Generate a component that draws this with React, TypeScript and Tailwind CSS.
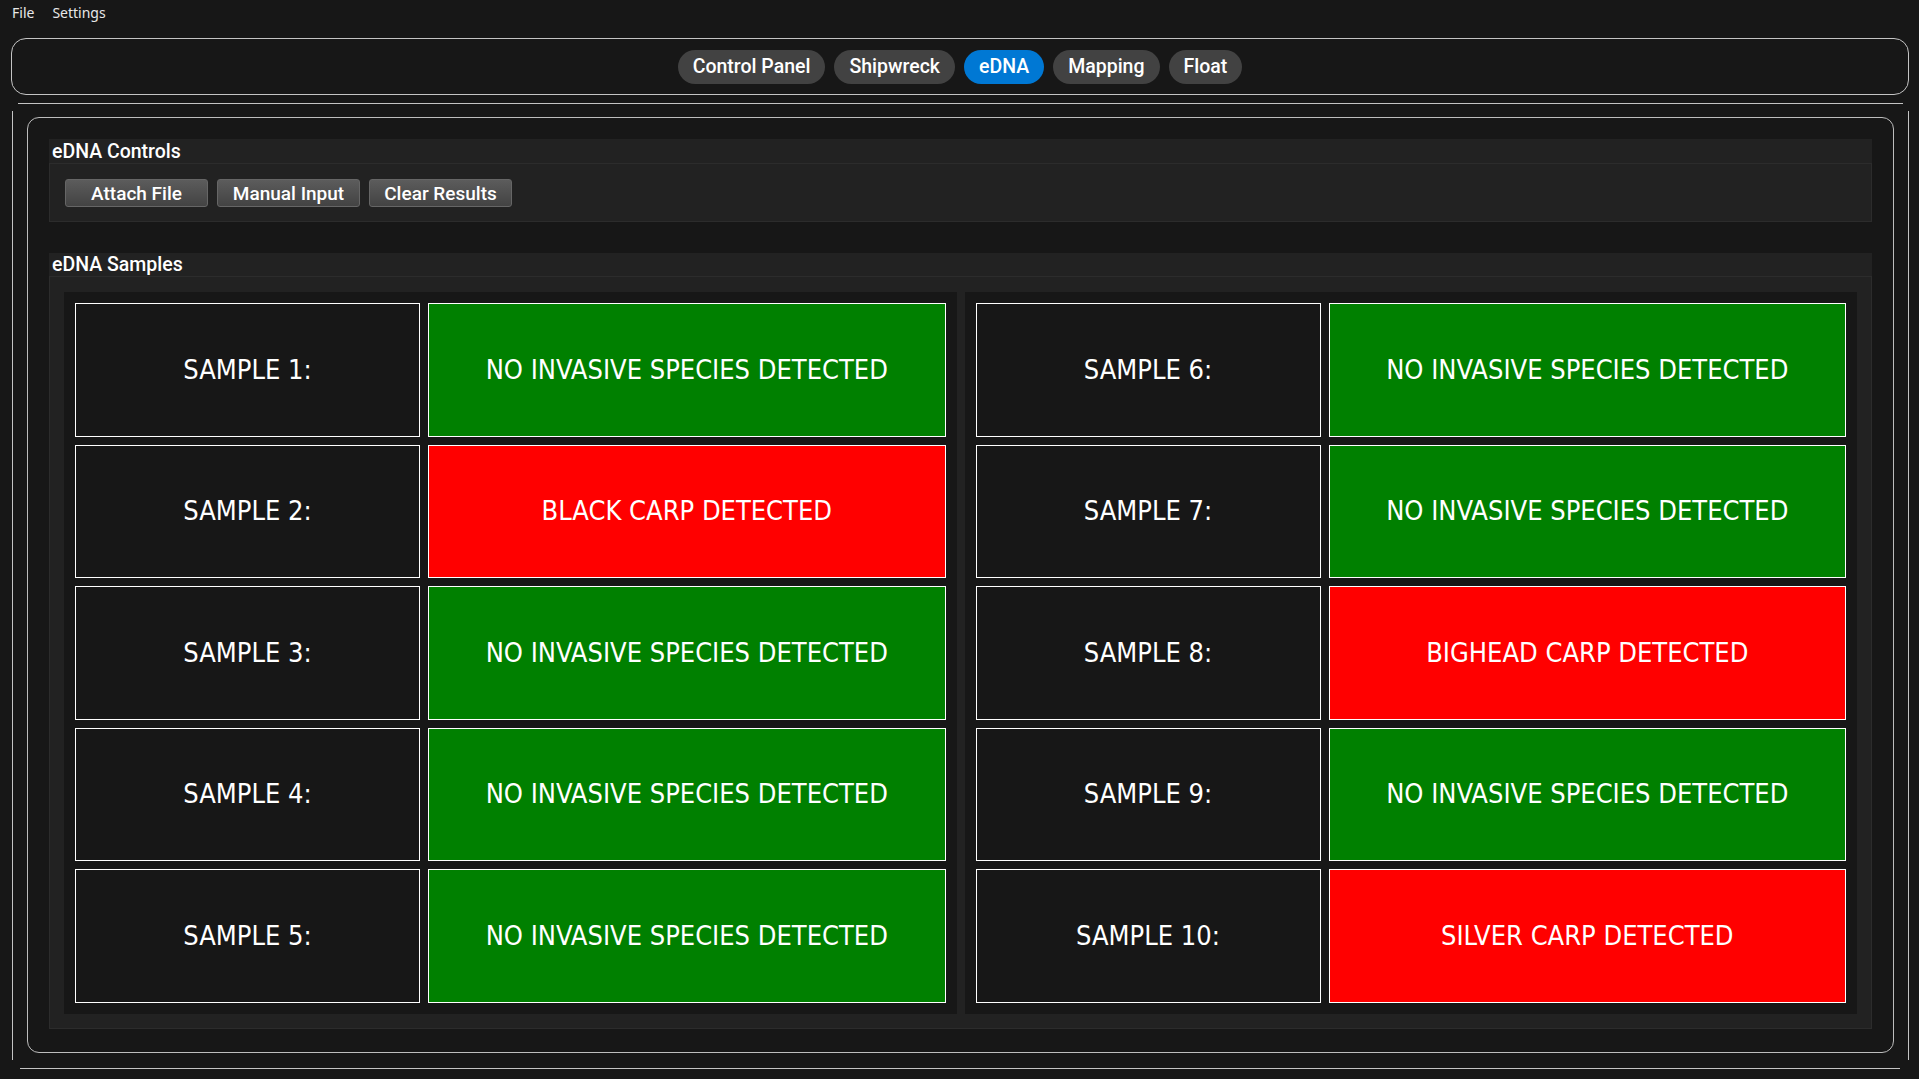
const samples = [
  { label: "SAMPLE 1:", result: "NO INVASIVE SPECIES DETECTED", alert: false },
  { label: "SAMPLE 2:", result: "BLACK CARP DETECTED", alert: true },
  { label: "SAMPLE 3:", result: "NO INVASIVE SPECIES DETECTED", alert: false },
  { label: "SAMPLE 4:", result: "NO INVASIVE SPECIES DETECTED", alert: false },
  { label: "SAMPLE 5:", result: "NO INVASIVE SPECIES DETECTED", alert: false },
  { label: "SAMPLE 6:", result: "NO INVASIVE SPECIES DETECTED", alert: false },
  { label: "SAMPLE 7:", result: "NO INVASIVE SPECIES DETECTED", alert: false },
  { label: "SAMPLE 8:", result: "BIGHEAD CARP DETECTED", alert: true },
  { label: "SAMPLE 9:", result: "NO INVASIVE SPECIES DETECTED", alert: false },
  { label: "SAMPLE 10:", result: "SILVER CARP DETECTED", alert: true },
];

const tabs = ["Control Panel", "Shipwreck", "eDNA", "Mapping", "Float"];

export default function App() {
  return (
    <div className="flex h-[1079px] w-full flex-col overflow-hidden bg-[#171717] font-['Roboto',sans-serif] text-white">
      {/* menu bar */}
      <div className="flex h-[25px] items-center gap-[18px] pl-[12px] font-['Noto_Sans',sans-serif] text-[14px] text-[#e8e8e8]">
        <span>File</span>
        <span>Settings</span>
      </div>

      {/* tab strip */}
      <div className="mt-[13px] ml-[11px] mr-[10px] flex h-[57px] items-center justify-center gap-[9px] rounded-[15px] border border-[#c4c4c4]">
        {tabs.map((t) => (
          <button
            key={t}
            className={
              t === "eDNA"
                ? "h-[34px] rounded-full bg-[#0078d4] px-[15px] text-[19.5px] font-medium text-white"
                : "h-[34px] rounded-full bg-[#424242] px-[15px] text-[19.5px] font-medium text-white"
            }
          >
            {t}
          </button>
        ))}
      </div>

      <div className="mt-[8px] ml-[18px] mr-[16px] h-px bg-[#c4c4c4]" />

      {/* tab content frame */}
      <div className="mt-[7px] ml-[12px] mr-[10px] h-[949px] border-x border-[#c4c4c4] px-[14px] pt-[6px]">
        <div className="flex h-[936px] flex-col rounded-[12px] border border-[#bdbdbd] p-[21px]">
          <SectionHeader title="eDNA Controls" h="h-[24px]" />
          <div className="flex h-[59px] gap-[9px] border border-[#2c2c2c] bg-[#222222] px-[15px] pt-[15px]">
            <ToolButton label="Attach File" />
            <ToolButton label="Manual Input" />
            <ToolButton label="Clear Results" />
          </div>

          <div className="mt-[31px]">
            <SectionHeader title="eDNA Samples" h="h-[23px]" />
          </div>
          <div className="grid h-[753px] grid-cols-2 gap-[8px] border border-[#2c2c2c] bg-[#222222] p-[14px] pt-[15px]">
            <SampleGroup items={samples.slice(0, 5)} />
            <SampleGroup items={samples.slice(5)} />
          </div>
        </div>
      </div>

      <div className="mt-[8px] ml-[20px] mr-[19px] h-px bg-[#c4c4c4]" />
    </div>
  );
}

function SectionHeader({ title, h }: { title: string; h: string }) {
  return (
    <div className={`${h} flex items-center bg-[#222222] pl-[3px] pt-[1px] text-[19.5px] font-medium text-white`}>
      {title}
    </div>
  );
}

function ToolButton({ label }: { label: string }) {
  return (
    <button className="h-[28px] w-[143px] rounded-[3px] border border-[#666666] bg-gradient-to-b from-[#5c5c5c] to-[#434343] text-[19px] font-medium leading-none text-white">
      {label}
    </button>
  );
}

function SampleGroup({
  items,
}: {
  items: { label: string; result: string; alert: boolean }[];
}) {
  return (
    <div className="grid grid-rows-5 gap-[8px] bg-[#171717] p-[11px]">
      {items.map((s) => (
        <div key={s.label} className="grid grid-cols-[345px_1fr] gap-[8px]">
          <div className="flex items-center justify-center border border-white bg-[#171717] font-['DejaVu_Sans_Condensed',sans-serif] text-[27px] text-white">
            {s.label}
          </div>
          <div
            className={
              s.alert
                ? "flex items-center justify-center border border-white bg-[#ff0000] font-['DejaVu_Sans_Condensed',sans-serif] text-[27px] text-white"
                : "flex items-center justify-center border border-white bg-[#008000] font-['DejaVu_Sans_Condensed',sans-serif] text-[27px] text-white"
            }
          >
            {s.result}
          </div>
        </div>
      ))}
    </div>
  );
}
